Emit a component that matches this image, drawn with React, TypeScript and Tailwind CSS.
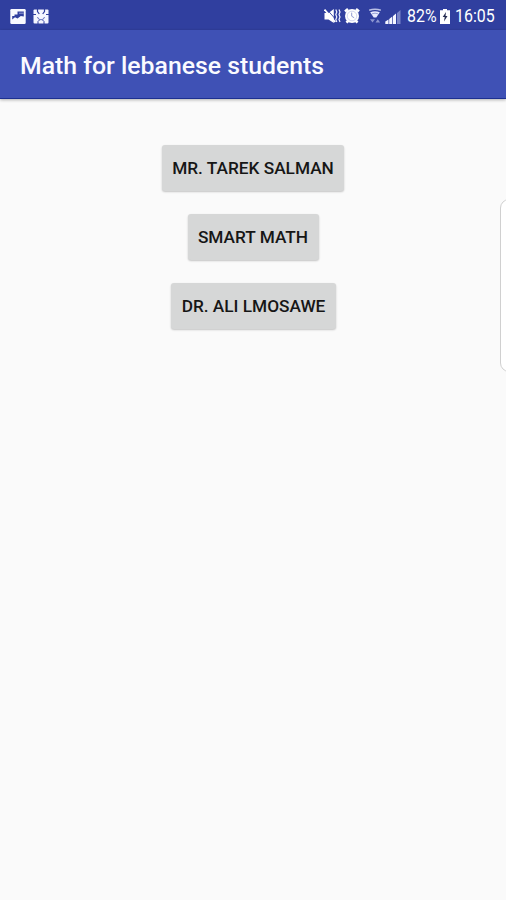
import React from 'react';

function GalleryIcon() {
  return (
    <svg className="h-[15px] w-4" viewBox="0 0 16 15">
      <rect x="0.3" y="0" width="15.4" height="15" rx="1.2" fill="#f8f9ff" />
      <path d="M2.2 7V10.5L5 8.2 7.5 9.5 10.8 7 13.8 7.6V2.5H7.5V5.5H4.5V7Z" fill="#303f9f" />
      <path d="M9 4.2h4.8" stroke="#aeb5e0" strokeWidth="0.8" />
    </svg>
  );
}

function PuzzleIcon() {
  return (
    <svg className="h-[15px] w-4" viewBox="0 0 16 15">
      <rect x="0.5" y="0.5" width="15" height="14" rx="1" fill="#f5f6ff" />
      <path d="M4.5 0V2.5L6.3 5M11.5 0V2.5L9.7 5M0 5.5h3M16 5.5h-3" stroke="#303f9f" strokeWidth="1.2" fill="none" />
      <path d="M4.5 8Q5 10.8 8 10.8T11.5 8" stroke="#6571bd" strokeWidth="1" fill="none" />
      <path d="M5 15v-2.5L6.5 11M11 15v-2.5L9.5 11" stroke="#303f9f" strokeWidth="1" fill="none" />
    </svg>
  );
}

function MuteIcon() {
  return (
    <svg className="h-4 w-[17px]" viewBox="0 0 17 16">
      <path d="M0.5 5h4L9.8 1v14L4.5 11.5h-4Z" fill="#fff" />
      <path d="M3 1.5 10.5 10" stroke="#303f9f" strokeWidth="0.9" />
      <path d="M0.5 1.5 11.2 14" stroke="#fff" strokeWidth="1.8" />
      <path d="M11.8 1.5 12.8 4 11.8 6.5 12.8 9 11.8 11.5 12.8 14M15 1.5 16 4 15 6.5 16 9 15 11.5 16 14" stroke="#f0f1ff" strokeWidth="1.2" fill="none" />
    </svg>
  );
}

function AlarmIcon() {
  return (
    <svg className="h-4 w-4" viewBox="0 0 16 16">
      <path d="M1 3.5 4 1M15 3.5 12 1M2.5 14.7 5 12M13.5 14.7 11 12" stroke="#fff" strokeWidth="2.6" />
      <circle cx="8" cy="8" r="7" fill="#fff" />
      <circle cx="8" cy="8" r="4.8" fill="none" stroke="#c5caea" strokeWidth="0.8" />
      <path d="M7.7 4.6V8.2L10.2 9.8" stroke="#929bd2" strokeWidth="1" fill="none" />
    </svg>
  );
}

function WifiIcon() {
  return (
    <svg className="h-4 w-[14px]" viewBox="0 0 14 16">
      <path d="M1.2 2.2Q7 .2 12.8 2.2" fill="none" stroke="#bac0e5" strokeWidth="1.5" />
      <path d="M2.2 4.2Q7 2.2 11.8 4.2L8.3 9.5H5.7Z" fill="#e8eaff" />
      <path d="M4 5.8Q7 4.5 10 5.8" fill="none" stroke="#7682c5" strokeWidth="0.7" />
      <path d="m2 11.2 2.5 3.3 2.5-3.3ZM7.5 14.5l2.3-3.3 2.3 3.3Z" fill="#8c96d0" />
    </svg>
  );
}

function SignalIcon() {
  return (
    <svg className="h-[15px] w-4" viewBox="0 0 16 15">
      <path d="M0.3 15V12.5L3.5 10.5V15ZM4.2 15V10L7.3 7.5V15ZM8 15V7L11 4.5V15Z" fill="#f5f6ff" />
      <path d="M12 4 15.5 1V15H12Z" fill="#7984c7" />
    </svg>
  );
}

function BatteryIcon() {
  return (
    <svg className="h-[15px] w-[10px]" viewBox="0 0 10 15">
      <path d="M3 0h4v1.2h3V15H0V1.2h3Z" fill="#fff" />
      <path d="M6 3 2.7 8h2L4 12.5 7.5 7h-2Z" fill="#252c50" />
    </svg>
  );
}

function AndroidButton({ children, width }: { children: string; width: string }) {
  return (
    <button className={`${width} flex h-[46px] items-center justify-center rounded-[3px] bg-[#d6d7d7] pt-px text-[17.25px] font-medium whitespace-nowrap text-[#161616] shadow-[0_1px_2px_rgba(0,0,0,0.22)]`}>
      {children}
    </button>
  );
}

export default function App() {
  return (
    <div className="relative h-[900px] w-[506px] overflow-hidden bg-[#fafafa] font-['Roboto',sans-serif]">
      <div className="flex h-[30px] items-center justify-between bg-[#303f9f] pt-[2px] pr-[11px] pl-[10px] text-[17.5px] text-white">
        <div className="flex items-center gap-[6.5px]">
          <GalleryIcon />
          <PuzzleIcon />
        </div>
        <div className="flex items-center">
          <MuteIcon />
          <span className="ml-[3px]"><AlarmIcon /></span>
          <span className="ml-[7.5px]"><WifiIcon /></span>
          <span className="ml-[3px]"><SignalIcon /></span>
          <span className="ml-[6px] flex w-[30px]">
            <span className="origin-left scale-x-[0.91] leading-6">82%</span>
          </span>
          <span className="ml-[3px]"><BatteryIcon /></span>
          <span className="ml-[5.5px] flex w-10">
            <span className="origin-left scale-x-[0.91] leading-6">16:05</span>
          </span>
        </div>
      </div>
      <header className="flex h-[69px] items-center border-b border-[#1d3090] bg-[#3f51b5] pt-1 pl-5 shadow-[0_1px_3px_rgba(0,0,0,0.3)]">
        <h1 className="text-[24.8px] font-medium whitespace-nowrap text-[#fafaff]">Math for lebanese students</h1>
      </header>
      <main className="flex flex-col items-center gap-[23px] pt-[46px]">
        <AndroidButton width="w-[182px]">MR. TAREK SALMAN</AndroidButton>
        <AndroidButton width="w-[131px]">SMART MATH</AndroidButton>
        <div className="pl-px"><AndroidButton width="w-[165px]">DR. ALI LMOSAWE</AndroidButton></div>
      </main>
      <div className="absolute top-[199px] left-[500px] h-[173px] w-5 rounded-[9px] border border-[#d0d0d0] bg-white" />
    </div>
  );
}
